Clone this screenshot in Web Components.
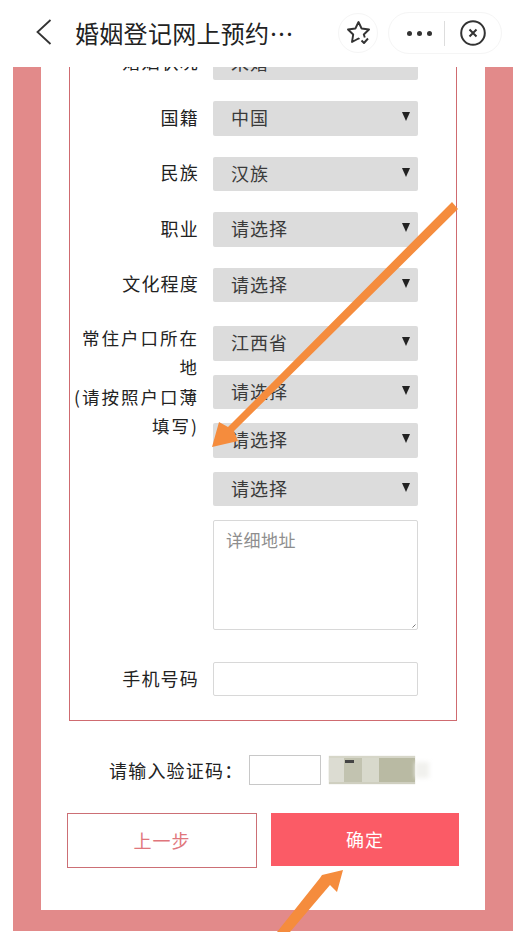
<!DOCTYPE html>
<html lang="zh">
<head>
<meta charset="utf-8">
<title>婚姻登记网上预约</title>
<style>
  html, body { margin: 0; padding: 0; background: #fff; }
  body { width: 514px; height: 932px; overflow: hidden; position: relative; font-family: "Noto Sans CJK SC", "Noto Sans", sans-serif; }
</style>
</head>
<body>
<app-navbar title="婚姻登记网上预约…"></app-navbar>

<page-frame>
  <form-box>
    <form-row label="婚姻状况"><select-box value="未婚"></select-box></form-row>
    <form-row label="国籍"><select-box value="中国"></select-box></form-row>
    <form-row label="民族"><select-box value="汉族"></select-box></form-row>
    <form-row label="职业"><select-box value="请选择"></select-box></form-row>
    <form-row label="文化程度"><select-box value="请选择"></select-box></form-row>
    <form-row label="常住户口所在地<br>(请按照户口薄填写)" tight>
      <select-box value="江西省"></select-box>
      <select-box value="请选择"></select-box>
      <select-box value="请选择"></select-box>
      <select-box value="请选择"></select-box>
      <text-field multi placeholder="详细地址"></text-field>
    </form-row>
    <form-row label="手机号码"><text-field></text-field></form-row>
  </form-box>
  <captcha-row></captcha-row>
  <action-bar></action-bar>
</page-frame>

<arrow-overlay></arrow-overlay>

<script>
class AppNavbar extends HTMLElement {
  constructor() {
    super();
    this.attachShadow({ mode: 'open' });
    this.shadowRoot.innerHTML = `
      <style>
        :host { display: flex; align-items: center; height: 67px; padding: 0 12px 0 35px; box-sizing: border-box; background: #fff; color: #222; }
        .back { width: 17px; height: 26px; flex: none; margin-top: -3px; }
        .title { margin-left: 23px; margin-top: -3px; font-size: 24px; letter-spacing: 0.3px; white-space: nowrap; flex: 1; }
        .star { width: 40px; height: 40px; margin-top: -1px; border: 1px solid #f5f5f5; border-radius: 50%; display: flex; align-items: center; justify-content: center; box-sizing: border-box; flex: none; }
        .capsule { width: 114px; height: 42px; margin-left: 10px; margin-top: -1px; border: 1px solid #f5f5f5; border-radius: 21px; display: flex; align-items: center; box-sizing: border-box; flex: none; }
        .more { width: 55px; display: flex; justify-content: center; gap: 5px; padding-left: 5px; box-sizing: border-box; }
        .more i { width: 5px; height: 5px; border-radius: 50%; background: #333; }
        .line { width: 1px; height: 25px; background: #ddd; }
        .close { margin-left: 15px; display: block; }
      </style>
      <svg class="back" viewBox="0 0 17 26"><path d="M15.500 1 2.500 13 15.500 25" fill="none" stroke="#333" stroke-width="1.800"/></svg>
      <div class="title">${this.getAttribute('title')}</div>
      <div class="star">
        <svg width="24" height="24" viewBox="0 0 24 24"><path d="M18.800 16.500 17.800 13.500 23 8.500 15.600 7.500 12.500 1 9.400 7.500 2 8.500 7.200 13.500 6 21 12.500 17.500 13.500 18M15.500 19.500 18 22 22 17.500" fill="none" stroke="#333" stroke-width="1.900" stroke-linejoin="round"/></svg>
      </div>
      <div class="capsule">
        <div class="more"><i></i><i></i><i></i></div>
        <div class="line"></div>
        <svg class="close" width="26" height="26" viewBox="0 0 26 26"><circle cx="13" cy="13" r="11.800" fill="none" stroke="#333" stroke-width="2"/><path d="M9.500 9.500l7 7M16.500 9.500l-7 7" fill="none" stroke="#333" stroke-width="2"/></svg>
      </div>`;
  }
}

class PageFrame extends HTMLElement {
  constructor() {
    super();
    this.attachShadow({ mode: 'open' });
    this.shadowRoot.innerHTML = `
      <style>
        :host { display: block; height: 864px; margin: 0 1px 0 13px; padding: 0 28px 21px; box-sizing: border-box; background: #e28a8a; overflow: hidden; }
        .panel { background: #fff; height: 100%; padding: 0 28px; box-sizing: border-box; overflow: hidden; }
        /* page is scrolled: the top of the form is above the fold */
        .scroll { margin-top: -66px; }
      </style>
      <div class="panel"><div class="scroll"><slot></slot></div></div>`;
  }
}

class FormBox extends HTMLElement {
  constructor() {
    super();
    this.attachShadow({ mode: 'open' });
    this.shadowRoot.innerHTML = `
      <style>
        :host { display: flex; flex-direction: column; gap: 21px; border: 1px solid #cf6b70; padding: 43.500px 38px 24px 0; box-sizing: border-box; }
      </style>
      <slot></slot>`;
  }
}

class FormRow extends HTMLElement {
  constructor() {
    super();
    this.attachShadow({ mode: 'open' });
    this.shadowRoot.innerHTML = `
      <style>
        :host { display: grid; grid-template-columns: 129px 205px; column-gap: 14px; align-items: center; }
        :host([tight]) { align-items: start; margin-top: 3px; margin-bottom: 11px; }
        .label { text-align: right; font-size: 18px; line-height: 29px; color: #222; letter-spacing: 1.200px; margin-top: -2px; }
        :host([tight]) .label { font-size: 17.500px; letter-spacing: 2px; line-height: 29.300px; margin-top: -3px; }
        .fields { display: flex; flex-direction: column; gap: 14px; }
      </style>
      <div class="label">${this.getAttribute('label')}</div>
      <div class="fields"><slot></slot></div>`;
  }
}

class SelectBox extends HTMLElement {
  constructor() {
    super();
    this.attachShadow({ mode: 'open' });
    this.shadowRoot.innerHTML = `
      <style>
        :host { display: flex; align-items: center; justify-content: space-between; height: 34.500px; padding: 0 8px 2px 18px; box-sizing: border-box; background: #dcdcdc; border-radius: 2px; font-size: 18px; color: #3a3a3a; letter-spacing: 1px; }
        .tri { width: 8px; height: 9px; margin-top: -1px; }
      </style>
      <span>${this.getAttribute('value')}</span>
      <svg class="tri" viewBox="0 0 8 9"><path d="M0 0h8L4 9z" fill="#222"/></svg>`;
  }
}

class TextField extends HTMLElement {
  constructor() {
    super();
    this.attachShadow({ mode: 'open' });
    const ph = this.getAttribute('placeholder') || '';
    this.shadowRoot.innerHTML = `
      <style>
        :host { display: block; position: relative; height: 34px; border: 1px solid #d8d8d8; border-radius: 2px; box-sizing: border-box; background: #fff; font-size: 17px; color: #8e8e8e; padding: 0 12px; letter-spacing: 0.500px; }
        :host([multi]) { height: 110px; padding: 6px 12px; }
        svg { position: absolute; right: 1px; bottom: 1px; }
      </style>
      ${ph}${this.hasAttribute('multi') ? '<svg width="4" height="4" viewBox="0 0 4 4"><path d="M3.500 .5 .5 3.500" stroke="#777" fill="none"/></svg>' : ''}`;
  }
}

class CaptchaRow extends HTMLElement {
  constructor() {
    super();
    this.attachShadow({ mode: 'open' });
    this.shadowRoot.innerHTML = `
      <style>
        :host { display: flex; align-items: center; height: 30px; margin: 34px 0 0 40px; font-size: 18px; color: #222; letter-spacing: 1.200px; white-space: nowrap; }
        .input { width: 72px; height: 30px; margin-left: 6px; border: 1px solid #c8c8c8; box-sizing: border-box; flex: none; }
        .code { width: 86px; height: 24px; margin-left: 8px; flex: none; position: relative; background: linear-gradient(90deg, #dcdcd2 0 17%, #c2c3b0 17% 38%, #d8d9cc 38% 58%, #b9baa3 58% 100%); box-shadow: 0 -2px 1px #d6d6c8, 0 2px 1px #cfcfc0; filter: blur(.5px); }
        .code::before { content: ""; position: absolute; left: 16px; top: 2px; width: 9px; height: 3px; background: #444; }
        .code::after { content: ""; position: absolute; left: 100%; top: 4px; width: 14px; height: 16px; background: #f1f1ee; filter: blur(2px); }
      </style>
      <span>请输入验证码：</span>
      <div class="input"></div>
      <div class="code"></div>`;
  }
}

class ActionBar extends HTMLElement {
  constructor() {
    super();
    this.attachShadow({ mode: 'open' });
    this.shadowRoot.innerHTML = `
      <style>
        :host { display: flex; align-items: flex-start; gap: 14px; margin: 28px -2px 0; font-size: 18px; letter-spacing: 1px; }
        div { display: flex; align-items: center; justify-content: center; box-sizing: border-box; padding-bottom: 2px; }
        .prev { width: 190px; height: 55px; border: 1px solid #cc6f75; color: #e0767c; }
        .ok { width: 188px; height: 53px; background: #fb5b66; color: #fff; }
      </style>
      <div class="prev">上一步</div>
      <div class="ok">确定</div>`;
  }
}

// orange annotation arrows painted on top of the screenshot
class ArrowOverlay extends HTMLElement {
  constructor() {
    super();
    this.attachShadow({ mode: 'open' });
    this.shadowRoot.innerHTML = `
      <style>
        :host { position: absolute; inset: 0; pointer-events: none; }
        svg { display: block; }
      </style>
      <svg width="514" height="932" viewBox="0 0 514 932" fill="#f58c3d">
        <path d="M452 202 458 209 234 431 238 441 212 447 219 422 228 427z"/>
        <path d="M343 870 337 892 330 885 290 932 277 932 320 878 322 875z"/>
      </svg>`;
  }
}

customElements.define('app-navbar', AppNavbar);
customElements.define('page-frame', PageFrame);
customElements.define('form-box', FormBox);
customElements.define('form-row', FormRow);
customElements.define('select-box', SelectBox);
customElements.define('text-field', TextField);
customElements.define('captcha-row', CaptchaRow);
customElements.define('action-bar', ActionBar);
customElements.define('arrow-overlay', ArrowOverlay);
</script>
</body>
</html>
